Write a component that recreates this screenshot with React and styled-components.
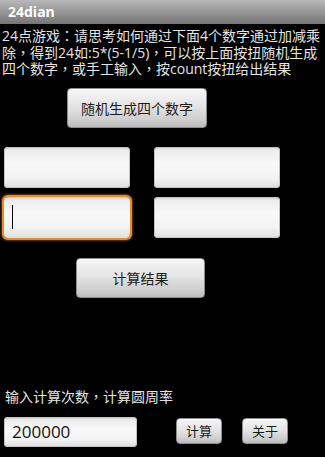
import React from 'react';
import styled, { createGlobalStyle } from 'styled-components';

const GlobalStyle = createGlobalStyle`
  html, body {
    margin: 0;
    padding: 0;
    background: #000;
  }
  body {
    font-family: "Open Sans", "Noto Sans CJK SC", sans-serif;
  }
`;

const Screen = styled.div`
  width: 325px;
  height: 457px;
  background: #000;
  display: flex;
  flex-direction: column;
  overflow: hidden;
`;

const TitleBar = styled.div`
  height: 24px;
  flex-shrink: 0;
  display: flex;
  align-items: center;
  padding-left: 8px;
  box-sizing: border-box;
  background: linear-gradient(#b9b9b9 0%, #959595 50%, #767676 100%);
  color: #fff;
  font-weight: 700;
  font-size: 14px;
  line-height: 1;
  padding-bottom: 1px;
`;

const Intro = styled.p`
  margin: 4px 2px 0 2px;
  color: #e4e4e4;
  font-size: 14px;
  line-height: 16.5px;
  letter-spacing: 0;
`;

// full-width punctuation sits centred in its cell, as on the device
const Punct = styled.span`
  font-family: "Open Sans", "Noto Sans CJK TC", sans-serif;
`;

const Button = styled.button`
  font-family: "Open Sans", "Noto Sans CJK SC", sans-serif;
  width: ${p => p.$w}px;
  height: ${p => p.$h}px;
  margin: ${p => p.$m};
  padding: 0;
  border: 1px solid #8e8e8e;
  border-radius: 4px;
  background: linear-gradient(#f6f6f6 0%, #e4e4e4 45%, #cfcfcf 80%, #bcbcbc 100%);
  box-shadow: inset 0 1px 0 #fff;
  color: #1c1c1c;
  font-size: ${p => p.$fs || 14}px;
  flex-shrink: 0;
`;

const FieldGrid = styled.div`
  display: grid;
  grid-template-columns: 126px 126px;
  grid-auto-rows: 41px;
  column-gap: 24px;
  row-gap: 9px;
  margin: 19px 0 0 4px;
`;

const Field = styled.div`
  position: relative;
  box-sizing: border-box;
  width: ${p => p.$w || 126}px;
  height: ${p => p.$h || 41}px;
  border-radius: 4px;
  background: linear-gradient(#c9c9c9 0px, #ececec 3px, #f8f8f8 40%, #f3f3f3 75%, #dedede 100%);
  box-shadow: ${p => (p.$focused ? '0 0 0 2px #e88a2e, 0 0 2px 3px rgba(232,138,46,0.45)' : 'inset 0 0 0 1px #c4c4c4')};
  display: flex;
  align-items: center;
  padding-left: 8px;
  color: #111;
  font-size: 17px;
`;

const Caret = styled.span`
  display: block;
  width: 1px;
  height: 24px;
  background: #000;
`;

const Label = styled.div`
  margin: 90px 0 0 5px;
  color: #e4e4e4;
  font-size: 14px;
  line-height: 17px;
`;

const BottomRow = styled.div`
  display: flex;
  align-items: flex-start;
  margin: 12px 0 0 4px;
`;

export default function App() {
  return (
    <>
      <GlobalStyle />
      <Screen>
        <TitleBar>24dian</TitleBar>
        <Intro>
          24点游戏<Punct>：</Punct>请思考如何通过下面4个数字通过加减乘除<Punct>，</Punct>得到24如:5*(5-1/5)<Punct>，</Punct>可以按上面按扭随机生成四个数字<Punct>，</Punct>或手工输入<Punct>，</Punct>按count按扭给出结果
        </Intro>
        <Button $w={140} $h={40} $m="10px 0 0 67px">随机生成四个数字</Button>
        <FieldGrid>
          <Field />
          <Field />
          <Field $focused>
            <Caret />
          </Field>
          <Field />
        </FieldGrid>
        <Button $w={129} $h={40} $m="20px 0 0 76px">计算结果</Button>
        <Label>输入计算次数<Punct>，</Punct>计算圆周率</Label>
        <BottomRow>
          <Field $w={133} $h={30}>200000</Field>
          <Button $w={46} $h={26} $m="1px 0 0 39px" $fs={13}>计算</Button>
          <Button $w={46} $h={26} $m="1px 0 0 20px" $fs={13}>关于</Button>
        </BottomRow>
      </Screen>
    </>
  );
}
